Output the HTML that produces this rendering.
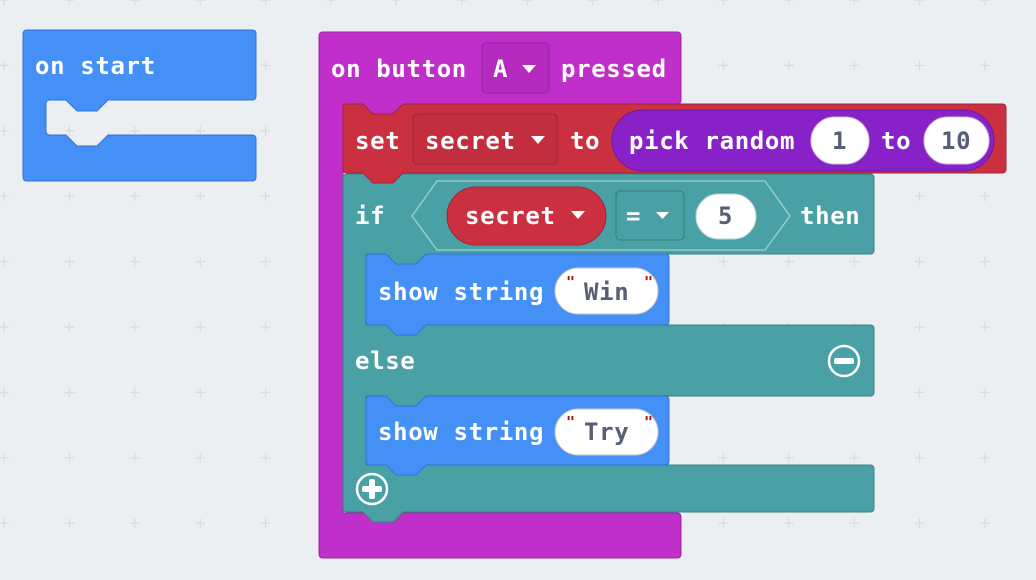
<!DOCTYPE html>
<html><head><meta charset="utf-8"><style>
html,body{margin:0;padding:0;background:#ebeff1;}
svg{display:block}
text{font-family:"DejaVu Sans Mono","Liberation Mono",monospace;font-weight:bold;font-size:24px;letter-spacing:0.65px;fill:#fff}
.d{fill:#575e75}
.q{fill:#a31515;font-size:15px;letter-spacing:0}
</style></head><body>
<svg width="1036" height="580" viewBox="0 0 1036 580" xmlns="http://www.w3.org/2000/svg">
<defs>
<pattern id="g" x="4" y="0" width="65.4" height="65.4" patternUnits="userSpaceOnUse">
<path d="M-5,0H5M0,-5V5M60.4,0H70.4M65.4,-5V5M-5,65.4H5M0,60.4V70.4M60.4,65.4H70.4M65.4,60.4V70.4" stroke="#d6dbdf" stroke-width="1.2"/>
</pattern>
</defs>
<rect width="1036" height="580" fill="#ebeff1"/>
<rect width="1036" height="580" fill="url(#g)"/>

<!-- on start -->
<path d="M27,30 H252 Q256,30 256,34 V96 Q256,100 252,100 H108 L97,111 H77 L66,100 H50 Q46,100 46,104 V131 Q46,135 50,135 H66 L77,146 H97 L108,135 H252 Q256,135 256,139 V177 Q256,181 252,181 H27 Q23,181 23,177 V34 Q23,30 27,30 Z" fill="#4590f7" stroke="#3374d0" stroke-width="1"/>
<text x="35" y="74">on start</text>

<!-- event block -->
<path d="M323,32 H677 Q681,32 681,36 V100 Q681,104 677,104 H403 L393,114 H373 L363,104 H343 V513 H677 Q681,513 681,517 V554 Q681,558 677,558 H323 Q319,558 319,554 V36 Q319,32 323,32 Z" fill="#c12fca" stroke="#9a25a1" stroke-width="1"/>
<text x="331" y="77">on button</text>
<rect x="482" y="43" width="67" height="50" rx="4" fill="#b42abc" stroke="#95229c"/>
<text x="493" y="77">A</text>
<path d="M522,65 L536,65 L529,73 Z" fill="#fff"/>
<text x="561" y="77">pressed</text>

<!-- if/else teal -->
<path d="M347,174 H870 Q874,174 874,178 V250 Q874,254 870,254 H426 L416,264 H396 L386,254 H366 V325 H870 Q874,325 874,329 V392 Q874,396 870,396 H426 L416,406 H396 L386,396 H366 V465 H870 Q874,465 874,469 V508 Q874,512 870,512 H403 L393,522 H373 L363,512 H347 Q343,512 343,508 V178 Q343,174 347,174 Z" fill="#49a0a5" stroke="#3a8286" stroke-width="1"/>

<!-- set block -->
<path d="M347,104 H363 L373,114 H393 L403,104 H1002 Q1006,104 1006,108 V169 Q1006,173 1002,173 H403 L393,183 H373 L363,173 H347 Q343,173 343,169 V108 Q343,104 347,104 Z" fill="#ca3040" stroke="#a2253a" stroke-width="1"/>
<text x="355" y="149">set</text>
<rect x="413" y="114" width="144" height="50" rx="4" fill="#c22e3d" stroke="#9f2433"/>
<text x="425" y="149">secret</text>
<path d="M531,136 L545,136 L538,144 Z" fill="#fff"/>
<text x="570" y="149">to</text>
<rect x="612" y="110" width="382" height="61" rx="30.5" fill="#8921c8" stroke="#6c1a9e"/>
<text x="629" y="149">pick random</text>
<rect x="811" y="117" width="58" height="47" rx="23.5" fill="#fff" stroke="#cfc3d8"/>
<text x="832" y="149" class="d">1</text>
<text x="881" y="149">to</text>
<rect x="924" y="117" width="65" height="47" rx="23.5" fill="#fff" stroke="#cfc3d8"/>
<text x="941" y="149" class="d">10</text>

<!-- if row -->
<text x="355" y="224">if</text>
<polygon points="437,181 765,181 790,216 765,250 437,250 412,216" fill="#49a0a5" stroke="#9fd0d3" stroke-width="1.3"/>
<rect x="447" y="187" width="159" height="58" rx="29" fill="#ca3040" stroke="#a2253a"/>
<text x="465" y="224">secret</text>
<path d="M571,211 L585,211 L578,219 Z" fill="#fff"/>
<rect x="616" y="191" width="68" height="49" rx="4" fill="#49a0a5" stroke="#367a7e"/>
<text x="626" y="224">=</text>
<path d="M656,212 L669,212 L662.5,219 Z" fill="#fff"/>
<rect x="696" y="194" width="60" height="45" rx="22.5" fill="#fff" stroke="#b9d9db"/>
<text x="718" y="224" class="d">5</text>
<text x="800" y="224">then</text>

<!-- show string Win -->
<path d="M370,254 H386 L396,264 H416 L426,254 H665 Q669,254 669,258 V321 Q669,325 665,325 H426 L416,335 H396 L386,325 H370 Q366,325 366,321 V258 Q366,254 370,254 Z" fill="#4590f7" stroke="#3374d0" stroke-width="1"/>
<text x="378" y="300">show string</text>
<rect x="555" y="268" width="103" height="46" rx="23" fill="#fff" stroke="#c8c8c8"/>
<text x="566" y="287" class="q">"</text>
<text x="644" y="287" class="q">"</text>
<text x="584" y="300" class="d">Win</text>

<!-- else -->
<text x="355" y="369">else</text>
<circle cx="844" cy="361" r="15" fill="none" stroke="#fff" stroke-width="2.5"/>
<rect x="834" y="358" width="20" height="6" rx="2" fill="#fff"/>

<!-- show string Try -->
<path d="M370,396 H386 L396,406 H416 L426,396 H665 Q669,396 669,400 V461 Q669,465 665,465 H426 L416,475 H396 L386,465 H370 Q366,465 366,461 V400 Q366,396 370,396 Z" fill="#4590f7" stroke="#3374d0" stroke-width="1"/>
<text x="378" y="440">show string</text>
<rect x="555" y="409" width="103" height="46" rx="23" fill="#fff" stroke="#c8c8c8"/>
<text x="566" y="427" class="q">"</text>
<text x="644" y="427" class="q">"</text>
<text x="584" y="440" class="d">Try</text>

<!-- plus -->
<circle cx="372" cy="489" r="15" fill="none" stroke="#fff" stroke-width="2.5"/>
<rect x="362" y="486" width="20" height="6" rx="2" fill="#fff"/>
<rect x="369" y="479" width="6" height="20" rx="2" fill="#fff"/>
</svg>
</body></html>
